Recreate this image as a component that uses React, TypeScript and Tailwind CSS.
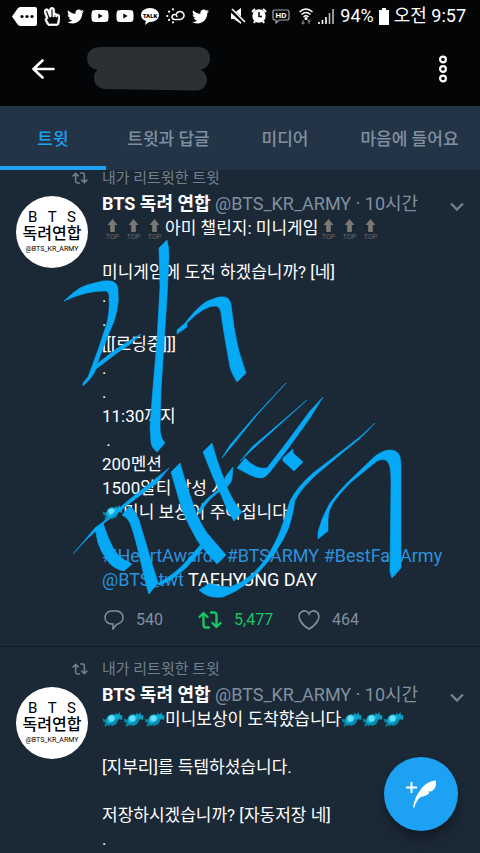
import type { ReactNode } from "react"
import { FaRegHandPeace, FaTwitter, FaYoutube } from "react-icons/fa"

const TABS = ["트윗", "트윗과 답글", "미디어", "마음에 들어요"]

const STROKES = [
  "M64 301L73 293Q80 287 87 285T103 281Q118 279 118 290Q119 300 117 310Q115 321 109 333L97 364Q118 346 141 334Q131 345 117 353L96 369Q93 377 83 386V383L88 377Q93 364 98 350L107 323Q110 308 109 300Q110 292 106 291Q88 290 64 301Z",
  "M159 248L167 240Q169 247 169 257L167 297L161 390L160 427Q160 438 165 443L157 452Q151 447 151 442L150 427L152 400L157 340L160 287Z",
  "M177 334V330L185 323Q202 301 213 299Q219 296 225 297Q230 298 231 305L234 327Q237 349 246 373L237 382Q231 372 230 367Q225 340 222 320Q221 306 216 306Q205 305 187 323V327Z",
  "M73 554L95 528L103 522L130 499L169 468L157 483L130 503L103 524L83 543Z",
  "M95 528L103 523L108 537Q113 549 118 555Q124 560 132 564L124 571Q113 569 107 560Q101 552 98 543Z",
  "M122 515L130 506Q136 511 139 520L150 557L158 583L149 594Q147 589 145 580L138 550Q133 530 130 523Q127 517 122 515Z",
  "M157 584Q173 575 183 565L202 543L204 547L187 567Q172 581 160 585Z",
  "M171 472L180 463L185 480L195 510Q200 523 207 533L226 555L217 564Q202 548 197 540Q189 526 182 510Z",
  "M203 452L212 443L217 460L227 487Q233 502 242 512L234 521Q227 511 222 497L213 477Z",
  "M233 467L232 479Q230 486 224 488Q206 500 200 514L198 511Q204 500 214 493Q222 487 226 476Z",
  "M222 458L230 445L255 416L286 383L257 415L232 446Z",
  "M240 461L253 446L307 400L254 448Z",
  "M237 468L245 458Q250 464 257 467Q263 469 267 468L287 442L310 411L323 397L310 418L287 450L270 472Q266 477 262 478Q256 478 250 475Z",
  "M293 449V453L303 462L294 471L283 461V458Z",
  "M375 423Q362 438 347 449L317 474Q303 486 295 500Q293 515 289 527Q279 553 250 581Q237 592 223 597Q208 599 199 590L210 583Q218 587 230 587Q254 579 270 552Q279 536 283 523L290 501Q297 487 313 473L347 447Q362 436 375 423Z",
  "M318 539V532Q322 516 330 503Q338 492 347 483L373 458Q382 450 390 450Q398 450 400 457Q401 462 401 467V568L392 578L390 572L391 483Q391 468 389 464Q386 457 377 461L350 483Q340 493 333 503Q328 511 328 520V531Z",
]

function Candy() {
  return (
    <svg viewBox="0 0 21 18" className="inline-block h-[18px] w-[21px] align-[-4px]">
      <path d="M6 8L2.500 8.500L0.500 7L1.500 11L4 12L2.500 14L3 16L5.500 14L7 15.500L8.500 12.500Z" fill="#0b86a3" />
      <path d="M13 6L13.500 1.500L15.500 3.500L17.500 1L18 4L20.500 4.500L20 9L17.500 8L14.500 10Z" fill="#0b9fc0" />
      <circle cx="10.200" cy="8.800" r="5.600" fill="#12b4de" />
      <path d="M5.500 12Q12 13.500 15 6Q17 12.500 11.500 14.300Q8 15 5.500 12" fill="#0987aa" />
      <circle cx="9.500" cy="7.500" r="3" fill="#6adffa" />
    </svg>
  )
}

function TopArrow() {
  return (
    <svg viewBox="0 0 21 20" className="inline-block h-5 w-[21px] align-[-5px]">
      <path d="M10.500 0L15.500 6H12.800V13H8.200V6H5.500Z" fill="#7b7875" />
      <text
        x="10.500"
        y="19.500"
        fontSize="7"
        textAnchor="middle"
        fill="#6e6a67"
        fontFamily="Roboto, sans-serif"
      >
        TOP
      </text>
    </svg>
  )
}

function RetweetIcon({ className }: { className: string }) {
  return (
    <svg
      viewBox="0 0 24 18"
      fill="none"
      stroke="currentColor"
      strokeWidth="2.400"
      strokeLinecap="round"
      strokeLinejoin="round"
      className={className}
    >
      <path d="M1.500 6L5.500 2L9.500 6M5.500 2.500V14Q5.500 16.500 8 16.500H11" />
      <path d="M14.500 12L18.500 16L22.500 12M18.500 15.500V4Q18.500 1.500 16 1.500H13" />
    </svg>
  )
}

function StatusBar() {
  return (
    <div className="flex h-8 items-center justify-between pr-3.5 pl-3 text-white">
      <div className="flex items-center gap-[7px]">
        <svg viewBox="0 0 25 19" className="h-[19px] w-[25px]">
          <path d="M8 0H23Q25 0 25 2V17Q25 19 23 19H8L6 18L0 9.500L6 1Z" fill="#fff" />
          <circle cx="10" cy="9.500" r="1.600" />
          <circle cx="15" cy="9.500" r="1.600" />
          <circle cx="20" cy="9.500" r="1.600" />
        </svg>
        <FaRegHandPeace className="h-[19px] w-4" stroke="#fff" strokeWidth="18" />
        <FaTwitter className="h-[17px] w-[17px]" />
        <FaYoutube className="h-[18px] w-[18px]" />
        <FaYoutube className="h-[18px] w-[18px]" />
        <svg viewBox="0 0 18 17" className="h-[17px] w-[18px]">
          <path d="M9 0C14 0 18 3 18 7S14 14 9 14H8L4 17L5 13Q0 11 0 7C0 3 4 0 9 0Z" fill="#fff" />
          <text x="9" y="9.500" fontSize="6" fontWeight="900" textAnchor="middle">
            TALK
          </text>
        </svg>
        <svg
          viewBox="0 0 19 16"
          fill="none"
          stroke="#fff"
          strokeWidth="1.500"
          strokeLinecap="round"
          className="h-4 w-[19px]"
        >
          <path d="M11 8.500A2.500 2.500 0 1 0 8.500 11.500H14A4 4 0 1 0 10.500 5.500" />
          <path d="M7 1.200V1.400M3 3.500L3.200 3.700M1.200 8H1.400M3 12L3.200 11.800M7 14.500V14.300" strokeWidth="2" />
        </svg>
        <FaTwitter className="h-[17px] w-[17px]" />
      </div>
      <div className="flex items-center gap-[5px]">
        <svg viewBox="0 0 16 16" className="h-4 w-4">
          <path d="M1 5H4L11 0V16L4 11H1Z" fill="#fff" />
          <path d="M0 1L15 15" stroke="#030507" strokeWidth="4" />
          <path d="M2 1L15 14" stroke="#fff" strokeWidth="1.600" />
        </svg>
        <svg viewBox="0 0 16 16" className="h-4 w-4">
          <circle cx="8" cy="8" r="6.700" fill="#fff" />
          <path d="M1 4L4 1M12 1L15 4M3 15L4 13M13 15L12 13" stroke="#fff" strokeWidth="2" />
          <path d="M8 4V8.500H11" fill="none" stroke="#030507" strokeWidth="1.500" />
        </svg>
        <svg viewBox="0 0 18 15" className="h-[15px] w-[18px]">
          <path
            d="M3 1H15Q17 1 17 3V9Q17 11 15 11H7L4 14V11H3Q1 11 1 9V3Q1 1 3 1Z"
            fill="none"
            stroke="#a4a5a6"
            strokeWidth="1.200"
          />
          <text x="9" y="9" fontSize="8" fontWeight="700" textAnchor="middle" fill="#fff">
            HD
          </text>
        </svg>
        <svg viewBox="0 0 14 17" fill="none" stroke="#fff" strokeWidth="1.500" className="ml-1 h-[17px] w-3.5">
          <path d="M0.500 4Q7 -2 13.500 4M2.500 6.500Q7 2.500 11.500 6.500M4.500 9Q7 6.500 9.500 9" />
          <circle cx="7" cy="10.500" r="0.800" />
          <path d="M4 12V16M2.500 14.500L4 16L5.500 14.500M10 16V12M8.500 13.500L10 12L11.500 13.500" stroke="#777" strokeWidth="1.200" />
        </svg>
        <svg viewBox="0 0 17 16" className="h-4 w-[17px]">
          <path d="M1 14V16M4.500 12V16M8 9V16" stroke="#fff" strokeWidth="1.600" />
          <path d="M11.500 5V16M15 1V16" stroke="#bbb" strokeWidth="1.600" />
        </svg>
        <span className="text-lg">94%</span>
        <svg viewBox="0 0 10 17" className="h-[17px] w-2.5">
          <path d="M3 0H7V2H10V17H0V2H3Z" fill="#fff" />
        </svg>
        <span className="text-lg whitespace-nowrap">오전 9:57</span>
      </div>
    </div>
  )
}

function AppBar() {
  return (
    <div className="flex h-[74px] items-center justify-between px-8">
      <div className="flex items-center gap-8">
        <button aria-label="뒤로">
          <svg
            viewBox="0 0 23 20"
            fill="none"
            stroke="#fff"
            strokeWidth="2.600"
            strokeLinecap="round"
            strokeLinejoin="round"
            className="h-5 w-[23px]"
          >
            <path d="M10.500 1.500L1.500 10L10.500 18.500M2 10H21.500" />
          </svg>
        </button>
        <svg viewBox="0 0 124 44" className="h-11 w-[124px]">
          <path
            d="M12 0H112Q123 1 123 11Q123 20 114 23Q120 26 120 33Q119 43 109 43.500L17 42Q7 40 7 31Q7 25 11 23Q0 21 0 11Q1 1 12 0Z"
            fill="#2b3034"
          />
        </svg>
      </div>
      <button aria-label="더보기">
        <svg viewBox="0 0 10 28" fill="none" stroke="#fff" strokeWidth="2.200" className="h-7 w-2.5">
          <circle cx="5" cy="4.500" r="2.900" />
          <circle cx="5" cy="14" r="2.900" />
          <circle cx="5" cy="23.500" r="2.900" />
        </svg>
      </button>
    </div>
  )
}

function Avatar() {
  return (
    <div className="flex size-[72px] flex-col items-center justify-center rounded-full bg-white text-black">
      <div className="flex w-12 justify-between text-[15px] leading-4">
        <span>B</span>
        <span>T</span>
        <span>S</span>
      </div>
      <div className="text-base leading-[18px] font-medium whitespace-nowrap">독려연합</div>
      <div className="text-[7px] leading-3">@BTS_KR_ARMY</div>
    </div>
  )
}

interface TweetProps {
  children: ReactNode
  actions?: ReactNode
}

function Tweet({ children, actions }: TweetProps) {
  return (
    <article className="grid grid-cols-[72px_1fr] gap-x-3.5 border-b border-[#111a24] px-4 pt-3 pb-4">
      <RetweetIcon className="h-3 w-4 self-center justify-self-end text-[#71808e]" />
      <p className="text-[15px] leading-5 text-[#71808e]">내가 리트윗한 트윗</p>
      <div className="pt-2">
        <Avatar />
      </div>
      <div className="min-w-0 pt-1 text-lg leading-6 text-white">
        <div className="flex items-center justify-between">
          <div className="whitespace-nowrap">
            <b>BTS 독려 연합</b>{" "}
            <span className="text-[#8090a0]">@BTS_KR_ARMY · 10시간</span>
          </div>
          <button aria-label="트윗 메뉴" className="pt-1">
            <svg viewBox="0 0 14 9" fill="none" stroke="#71808e" strokeWidth="2.400" className="h-[9px] w-3.5">
              <path d="M1 1.500L7 7.500L13 1.500" />
            </svg>
          </button>
        </div>
        {children}
        {actions}
      </div>
    </article>
  )
}

function Actions() {
  return (
    <div className="mt-[18px] flex h-5 items-center text-base text-[#8090a0]">
      <button className="flex w-24 items-center gap-3" aria-label="답글 540">
        <svg viewBox="0 0 20 20" fill="none" stroke="currentColor" strokeWidth="1.500" className="ml-0.5 size-5">
          <path d="M7.500 1H12.500C16.500 1 19 4 19 7.500C19 11 16.500 13.500 12.500 14.500L9 19V14H7.500C3.500 14 1 11 1 7.500C1 4 3.500 1 7.500 1Z" />
        </svg>
        540
      </button>
      <button className="flex w-[100px] items-center gap-3 text-[#19c463]" aria-label="리트윗 5,477">
        <RetweetIcon className="h-[18px] w-6" />
        5,477
      </button>
      <button className="flex items-center gap-3" aria-label="마음에 들어요 464">
        <svg viewBox="0 0 22 20" fill="none" stroke="currentColor" strokeWidth="1.600" className="h-5 w-[22px]">
          <path d="M11 4C9.500 0.500 6 0.500 4 1.500C0.500 3.500 0.500 7.500 2.500 11C4.500 14.500 8 17.500 11 19C14 17.500 17.500 14.500 19.500 11C21.500 7.500 21.500 3.500 18 1.500C16 0.500 12.500 0.500 11 4Z" />
        </svg>
        464
      </button>
    </div>
  )
}

export default function App() {
  return (
    <div className="relative flex h-screen flex-col overflow-hidden bg-[#1b2836] font-['Roboto','Noto_Sans_CJK_KR',sans-serif]">
      <header className="relative z-10 shrink-0 bg-[#030507]">
        <StatusBar />
        <AppBar />
        <nav className="grid h-16 grid-cols-[106fr_125fr_108fr_141fr] bg-[#243447]">
          {TABS.map((tab, i) => (
            <a
              key={tab}
              href="#"
              className={`flex items-center justify-center border-b-4 pt-2 text-[17px] font-medium whitespace-nowrap ${
                i === 0
                  ? "border-[#1da1f2] text-[#1da1f2]"
                  : "border-transparent text-[#8090a0]"
              }`}
            >
              {tab}
            </a>
          ))}
        </nav>
      </header>

      <main className="-mt-3.5 min-h-0 flex-1 overflow-hidden">
        <Tweet actions={<Actions />}>
          <div className="flex flex-col gap-5 text-[17px] whitespace-nowrap">
            <p>
              <TopArrow />
              <TopArrow />
              <TopArrow />
              아미 챌린지: 미니게임
              <TopArrow />
              <TopArrow />
              <TopArrow />
            </p>
            <p>
              미니게임에 도전 하겠습니까? [네]
              <br />.
              <br />.
              <br />
              [[[로딩중]]]
              <br />.
              <br />.
              <br />
              11:30까지
              <br />
              &nbsp;.
              <br />
              200멘션
              <br />
              1500알티 달성 시
              <br />
              <Candy />
              미니 보상이 주어집니다!
            </p>
            <p className="text-lg leading-6">
              <a href="#" className="text-[#2b93dc]">#iHeartAwards</a>{" "}
              <a href="#" className="text-[#2b93dc]">#BTSARMY</a>{" "}
              <a href="#" className="text-[#2b93dc]">#BestFanArmy</a>
              <br />
              <a href="#" className="text-[#2b93dc]">@BTS_twt</a> TAEHYUNG DAY
            </p>
          </div>
        </Tweet>
        <Tweet>
          <div className="flex flex-col gap-6 text-[17px] whitespace-nowrap">
            <p>
              <Candy />
              <Candy />
              <Candy />
              미니보상이 도착햤습니다
              <Candy />
              <Candy />
              <Candy />
            </p>
            <p>[지부리]를 득템하셨습니다.</p>
            <p>
              저장하시겠습니까? [자동저장 네]
              <br />.
            </p>
          </div>
        </Tweet>
      </main>

      {/* handwriting over the feed */}
      <svg
        viewBox="0 0 480 853"
        className="pointer-events-none absolute top-0 left-0 h-[853px] w-[480px]"
        fill="#05a9f6"
        stroke="#05a9f6"
        strokeWidth="0.600"
      >
        {STROKES.map((d) => (
          <path key={d} d={d} />
        ))}
      </svg>

      <button
        aria-label="트윗 쓰기"
        className="absolute right-[22px] bottom-[22px] flex size-[74px] items-center justify-center rounded-full bg-[#1da1f2] shadow-lg shadow-black/30"
      >
        <svg viewBox="0 0 30 28" className="h-7 w-[30px]">
          <path d="M0 7.500H11M5.500 2V13" stroke="#fff" strokeWidth="2" />
          <path
            d="M30 0.500C31 7 28 10 25 11.500L22 11.500L23.500 13C21 15.500 18 16.500 14.500 17C11 20 9.500 23.500 8.300 27.500L7 27.500C8 20 11 14 15.500 8.500C19.500 3.500 24 1 30 0.500Z"
            fill="#fff"
          />
        </svg>
      </button>
    </div>
  )
}
